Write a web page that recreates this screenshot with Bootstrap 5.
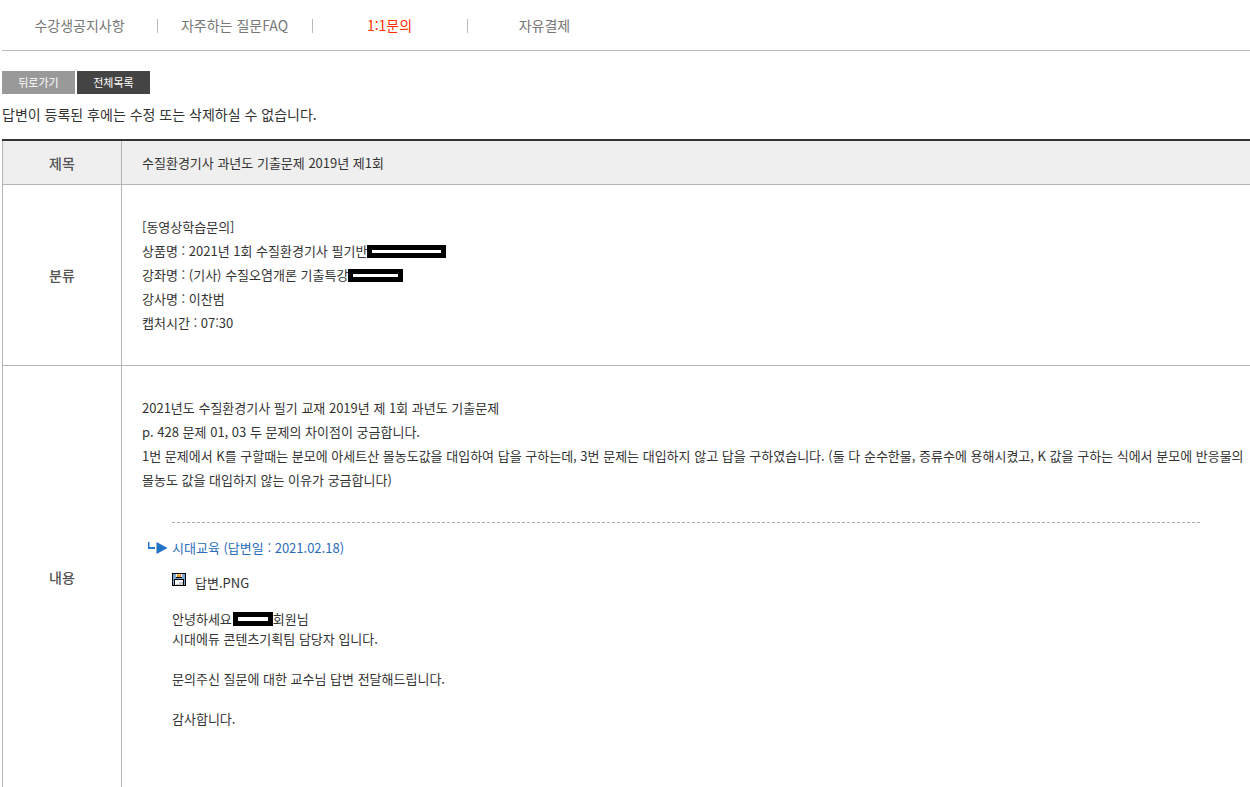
<!DOCTYPE html>
<html lang="ko">
<head>
<meta charset="utf-8">
<meta name="viewport" content="width=device-width, initial-scale=1">
<title>1:1문의</title>
<link href="https://cdn.jsdelivr.net/npm/bootstrap@5.3.0/dist/css/bootstrap.min.css" rel="stylesheet">
<style>
body{font-family:"Noto Sans CJK KR",sans-serif;font-size:13px;line-height:24px;color:#333;background:#fff;padding-left:2px}
.topmenu{border-bottom:1px solid #bbb;height:51px}
.topmenu li{width:155px;position:relative}
.topmenu li+li::before{content:"";position:absolute;left:0;top:5px;width:1px;height:14px;background:#bbb}
.topmenu .nav-link{font-size:14px;color:#777;line-height:22px}
.topmenu .nav-link.active{color:#ff3000}
.toolbar{gap:2px;padding-top:20px}
.btn-flat{width:73px;height:23px;font-size:11px;line-height:21px;color:#fff;background:#999;border:0;border-radius:0;padding:0}
.btn-flat:hover{color:#fff;background:#777}
.btn-flat.btn-list{background:#444}
.notice{font-size:14px;line-height:20px;padding:10px 0 15px}
.inquiry{border-top:2px solid #333;color:#333}
.inquiry th,.inquiry td{border:1px solid #b5b5b5;border-right:0;border-top:0}
.inquiry th{width:119px;font-size:14px;font-weight:500;color:#555;text-align:center}
.inquiry td{padding:30px 5px 30px 20px}
.inquiry .subject>*{background:#efefef;padding-top:10px;padding-bottom:9px}
.masked{display:inline-block;height:13px;border:5px solid #000;background:#fff;vertical-align:-2px}
.mask-lg{width:79px}
.mask-md{width:55px}
.mask-sm{width:40px;height:14px;margin-left:1px}
.reply{margin:30px 44px 28px 30px}
.reply-rule{height:1px;background:repeating-linear-gradient(90deg,#aaa 0 3px,transparent 3px 5px)}
.reply-head{color:#2a6ebb;margin-left:-24px;padding-top:13px}
.reply-text{line-height:20px;padding-top:14px}
.attachment{color:#333;padding-top:11px}
.attachment svg{margin:2px 9px 0 0}
</style>
</head>
<body>
<nav aria-label="게시판">
  <ul class="topmenu nav align-items-center">
    <li><a class="nav-link p-0 text-center" href="#">수강생공지사항</a></li>
    <li><a class="nav-link p-0 text-center" href="#">자주하는 질문FAQ</a></li>
    <li><a class="nav-link p-0 text-center active" aria-current="page" href="#">1:1문의</a></li>
    <li><a class="nav-link p-0 text-center" href="#">자유결제</a></li>
  </ul>
</nav>
<main>
  <div class="toolbar d-flex">
    <button type="button" class="btn btn-flat">뒤로가기</button>
    <button type="button" class="btn btn-flat btn-list">전체목록</button>
  </div>
  <p class="notice mb-0">답변이 등록된 후에는 수정 또는 삭제하실 수 없습니다.</p>
  <table class="inquiry w-100">
    <tbody>
      <tr class="subject">
        <th scope="row">제목</th>
        <td>수질환경기사 과년도 기출문제 2019년 제1회</td>
      </tr>
      <tr>
        <th scope="row">분류</th>
        <td>
          [동영상학습문의]<br>
          상품명 : 2021년 1회 수질환경기사 필기반<span class="masked mask-lg"></span><br>
          강좌명 : (기사) 수질오염개론 기출특강<span class="masked mask-md"></span><br>
          강사명 : 이찬범<br>
          캡처시간 : 07:30
        </td>
      </tr>
      <tr>
        <th scope="row">내용</th>
        <td>
          <p class="mb-0">2021년도 수질환경기사 필기 교재 2019년 제 1회 과년도 기출문제<br>
          p. 428 문제 01, 03 두 문제의 차이점이 궁금합니다.<br>
          1번 문제에서 K를 구할때는 분모에 아세트산 몰농도값을 대입하여 답을 구하는데, 3번 문제는 대입하지 않고 답을 구하였습니다. (둘 다 순수한물, 증류수에 용해시켰고, K 값을 구하는 식에서 분모에 반응물의 몰농도 값을 대입하지 않는 이유가 궁금합니다)</p>
          <section class="reply">
            <div class="reply-rule"></div>
            <div class="reply-head d-flex align-items-center">
              <svg width="24" height="14" viewBox="0 0 24 14" aria-hidden="true"><path d="M0 1h1.5v5H7v2H0z" fill="#2a78c8"/><path d="M8.500 1l11 6-11 6z" fill="#1f72c4"/></svg>
              <span>시대교육 (답변일 : 2021.02.18)</span>
            </div>
            <a class="attachment d-flex text-decoration-none" href="#">
              <svg width="14" height="13" viewBox="0 0 14 13" aria-hidden="true" shape-rendering="crispEdges"><path fill="#000" d="M0 0h14v13H0z"/><path fill="#7ba7d0" d="M1 1h12v11H1z"/><path fill="#000" d="M4 0h6v5H4zM2 6h10v1h-10zM2 7h1v5h-1zM11 7h1v5h-1z"/><path fill="#f2962e" d="M5 1h4v3H5z"/><path fill="#fff" d="M4 1h1v3H4zM9 1h1v3H9z"/><path fill="#ffd65c" d="M6 1h2v1H6z"/><path fill="#f8f8f8" d="M3 7h8v5H3z"/><path fill="#ccc" d="M7 9h4v3H4v-1h3z"/></svg>
              <span>답변.PNG</span>
            </a>
            <div class="reply-text">
              안녕하세요<span class="masked mask-sm"></span>회원님<br>
              시대에듀 콘텐츠기획팀 담당자 입니다.<br><br>
              문의주신 질문에 대한 교수님 답변 전달해드립니다.<br><br>
              감사합니다.
            </div>
          </section>
        </td>
      </tr>
    </tbody>
  </table>
</main>
<script src="https://cdn.jsdelivr.net/npm/bootstrap@5.3.0/dist/js/bootstrap.bundle.min.js"></script>
</body>
</html>
